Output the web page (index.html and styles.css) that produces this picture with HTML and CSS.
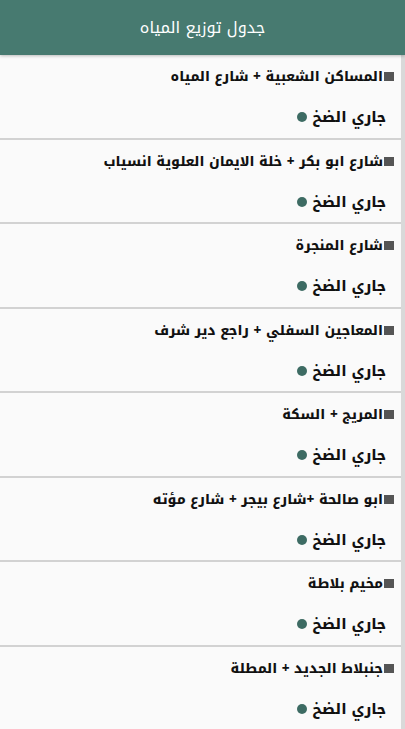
FILE: index.html
```html
<!DOCTYPE html>
<html lang="ar" dir="rtl">
<head>
<meta charset="UTF-8">
<meta name="viewport" content="width=device-width, initial-scale=1.0">
<title>جدول توزيع المياه</title>
<link rel="stylesheet" href="styles.css">
</head>
<body>
<div class="header">جدول توزيع المياه</div>
<div class="list">
    <div class="item">
        <div class="title">المساكن الشعبية + شارع المياه</div>
        <div class="status">جاري الضخ <span class="dot"></span></div>
    </div>
    <div class="item">
        <div class="title">شارع ابو بكر + خلة الايمان العلوية انسياب</div>
        <div class="status">جاري الضخ <span class="dot"></span></div>
    </div>
    <div class="item">
        <div class="title">شارع المنجرة</div>
        <div class="status">جاري الضخ <span class="dot"></span></div>
    </div>
    <div class="item">
        <div class="title">المعاجين السفلي + راجع دير شرف</div>
        <div class="status">جاري الضخ <span class="dot"></span></div>
    </div>
    <div class="item">
        <div class="title">المريج + السكة</div>
        <div class="status">جاري الضخ <span class="dot"></span></div>
    </div>
    <div class="item">
        <div class="title">ابو صالحة +شارع بيجر + شارع مؤته</div>
        <div class="status">جاري الضخ <span class="dot"></span></div>
    </div>
    <div class="item">
        <div class="title">مخيم بلاطة</div>
        <div class="status">جاري الضخ <span class="dot"></span></div>
    </div>
    <div class="item">
        <div class="title">جنبلاط الجديد + المطلة</div>
        <div class="status">جاري الضخ <span class="dot"></span></div>
    </div>
</div>
</body>
</html>
```

FILE: styles.css
```css
body {
    margin: 0;
    font-family: "Noto Kufi Arabic", "Noto Sans Arabic", "DejaVu Sans", sans-serif;
    background-color: #fafafa;
    color: #111;
}
.header {
    height: 55px;
    line-height: 55px;
    background-color: #477a70;
    color: #fff;
    text-align: center;
    font-size: 16px;
    box-shadow: 0 1px 3px rgba(0, 0, 0, 0.25);
    position: relative;
}
.list {
    border-right: 4px solid #d9d9d9;
}
.item {
    height: 82.5px;
    border-bottom: 2px solid #d2d2d2;
    padding-right: 7px;
}
.title {
    padding-top: 12px;
    font-size: 13.5px;
    font-weight: 800;
    line-height: 20px;
}
.title::before {
    content: "";
    display: inline-block;
    width: 10px;
    height: 9px;
    background-color: #555;
    margin-left: 1px;
}
.status {
    margin-top: 20px;
    padding-right: 8px;
    font-size: 14.5px;
    font-weight: 800;
    line-height: 20px;
}
.dot {
    display: inline-block;
    width: 10px;
    height: 10px;
    border-radius: 50%;
    background-color: #3d6b63;
    margin-right: 1px;
}
```
